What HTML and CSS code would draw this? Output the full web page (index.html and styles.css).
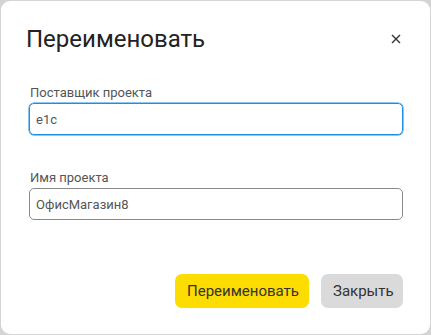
FILE: index.html
```html
<!DOCTYPE html>
<html lang="ru">
<head>
<meta charset="utf-8">
<link rel="stylesheet" href="styles.css">
</head>
<body>
<div class="dialog">
  <div class="header">
    <h1 class="title">Переименовать</h1>
    <button class="close" aria-label="Закрыть">
      <svg width="10" height="10" viewBox="0 0 10 10"><path d="M1 1L9 9M9 1L1 9" stroke="#333" stroke-width="1.4" fill="none"/></svg>
    </button>
  </div>
  <div class="field">
    <label class="label">Поставщик проекта</label>
    <div class="input focused">e1c</div>
  </div>
  <div class="field">
    <label class="label">Имя проекта</label>
    <div class="input">ОфисМагазин8</div>
  </div>
  <div class="footer">
    <button class="btn primary">Переименовать</button>
    <button class="btn secondary">Закрыть</button>
  </div>
</div>
</body>
</html>
```
FILE: styles.css
```css
html, body {
  margin: 0;
  padding: 0;
  background: #d4d4d4;
}
body {
  padding: 1px;
  font-family: Roboto, "Liberation Sans", sans-serif;
}
.dialog {
  box-sizing: border-box;
  width: 429px;
  height: 333px;
  background: #fff;
  border-radius: 9px;
  padding: 0 27px 0 28px;
  display: flex;
  flex-direction: column;
}
.header {
  display: flex;
  align-items: center;
  justify-content: space-between;
  height: 60px;
  margin-top: 8px;
  margin-left: -3px;
}
.title {
  margin: 0;
  font-weight: 400;
  font-size: 24px;
  color: #222;
}
.close {
  border: none;
  background: none;
  padding: 0;
  width: 10px;
  height: 10px;
  margin-right: 2px;
  display: flex;
}
.field {
  display: flex;
  flex-direction: column;
  margin-top: 16px;
}
.field + .field {
  margin-top: 35px;
}
.label {
  font-size: 13px;
  color: #555;
  line-height: 16px;
  margin-left: 1px;
  margin-bottom: 2px;
}
.input {
  box-sizing: border-box;
  height: 32px;
  border: 1px solid #8a8a8a;
  border-radius: 5px;
  padding: 0 6px;
  display: flex;
  align-items: center;
  font-size: 13px;
  color: #555;
}
.input.focused {
  border-color: #1a8fe3;
  box-shadow: 0 0 0 0.5px #1a8fe3;
}
.footer {
  margin-top: auto;
  margin-bottom: 26px;
  display: flex;
  justify-content: flex-end;
  gap: 12px;
}
.btn {
  height: 34px;
  border: none;
  border-radius: 7px;
  font-family: inherit;
  font-size: 15px;
  color: #333;
  padding: 0 12px;
}
.btn.primary {
  background: #fddc00;
  width: 134px;
}
.btn.secondary {
  background: #dadada;
  width: 82px;
}
```
